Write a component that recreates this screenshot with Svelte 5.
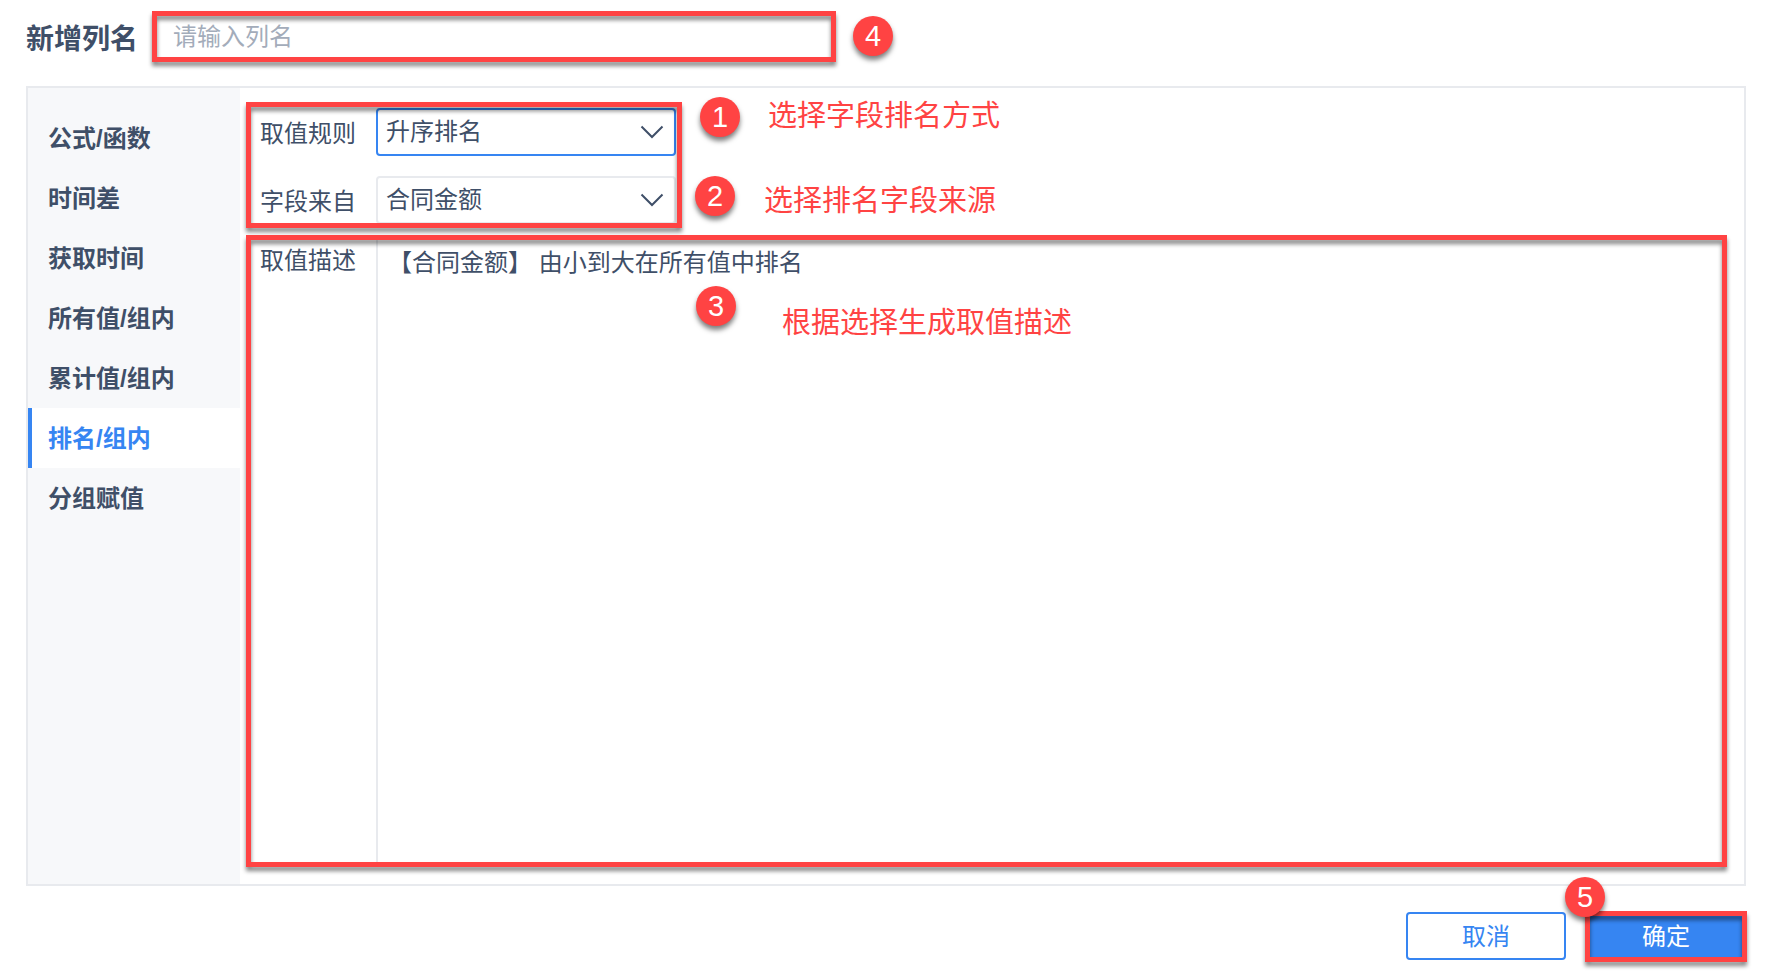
<script lang="ts">
  const tabs = ["公式/函数", "时间差", "获取时间", "所有值/组内", "累计值/组内", "排名/组内", "分组赋值"];
  const rules = ["升序排名", "降序排名"];
  const fields = ["合同金额"];

  let active = $state("排名/组内");
  let columnName = $state("");
  let rule = $state("升序排名");
  let field = $state("合同金额");

  const description = $derived(
    `【${field}】 ${rule === "升序排名" ? "由小到大" : "由大到小"}在所有值中排名`
  );
</script>

{#snippet chevron()}
  <svg class="chevron" viewBox="0 0 24 14" aria-hidden="true">
    <path d="M1.5 1.5 L12 12 L22.5 1.5" fill="none" stroke="currentColor" stroke-width="2" />
  </svg>
{/snippet}

<main class="page">
  <header class="name-row">
    <label class="title" for="column-name">新增列名</label>
    <div class="name-field framed">
      <input id="column-name" type="text" placeholder="请输入列名" bind:value={columnName} />
      <span class="badge badge-4">4</span>
    </div>
  </header>

  <section class="panel">
    <nav class="tabs">
      {#each tabs as tab}
        <button type="button" class="tab" class:active={tab === active} onclick={() => (active = tab)}>
          {tab}
        </button>
      {/each}
    </nav>

    <div class="form">
      <div class="options framed">
        <div class="row">
          <label for="rule">取值规则</label>
          <div class="select focused">
            <select id="rule" bind:value={rule}>
              {#each rules as item}
                <option>{item}</option>
              {/each}
            </select>
            {@render chevron()}
          </div>
        </div>
        <div class="row">
          <label for="field">字段来自</label>
          <div class="select">
            <select id="field" bind:value={field}>
              {#each fields as item}
                <option>{item}</option>
              {/each}
            </select>
            {@render chevron()}
          </div>
        </div>
        <span class="badge badge-1">1</span>
        <span class="note note-1">选择字段排名方式</span>
        <span class="badge badge-2">2</span>
        <span class="note note-2">选择排名字段来源</span>
      </div>

      <div class="description framed">
        <label for="description">取值描述</label>
        <textarea id="description" readonly value={description}></textarea>
        <span class="badge badge-3">3</span>
        <span class="note note-3">根据选择生成取值描述</span>
      </div>
    </div>
  </section>

  <footer class="actions">
    <button type="button" class="btn">取消</button>
    <div class="confirm framed">
      <button type="button" class="btn primary">确定</button>
      <span class="badge badge-5">5</span>
    </div>
  </footer>
</main>

<style>
  :global(body) {
    margin: 0;
    background: #fff;
  }

  .page {
    box-sizing: border-box;
    padding: 11px 22px 16px 26px;
    color: #3f4f68;
    font-family: "Liberation Sans", "Noto Sans CJK SC", sans-serif;
    font-size: 24px;
    line-height: 36px;
  }

  .page * {
    box-sizing: border-box;
  }

  button,
  input,
  select,
  textarea {
    margin: 0;
    border: 0;
    border-radius: 0;
    outline: 0;
    background: none;
    color: inherit;
    font: inherit;
  }

  button {
    cursor: pointer;
  }

  /* red highlight laid over a control or a group */
  .framed {
    position: relative;
  }

  .framed::after {
    content: "";
    position: absolute;
    inset: 0;
    border: 5px solid #ff4343;
    filter: drop-shadow(0 4px 2px rgba(0, 0, 0, 0.48));
    pointer-events: none;
  }

  .name-row {
    display: flex;
    align-items: center;
    gap: 14px;
    margin-bottom: 24px;
  }

  .title {
    flex: none;
    padding-top: 6px;
    font-size: 28px;
    font-weight: 700;
  }

  .name-field {
    flex: 0 1 684px;
  }

  .name-field input {
    display: block;
    width: 100%;
    height: 51px;
    padding: 0 21px;
  }

  .name-field input::placeholder {
    color: #a3acba;
    opacity: 1;
  }

  .panel {
    display: flex;
    border: 2px solid #e8eaee;
  }

  .tabs {
    flex: 0 0 212px;
    padding-top: 20px;
    background: #f7f8fa;
  }

  .tab {
    display: block;
    width: 100%;
    height: 60px;
    padding: 2px 16px 0;
    border-left: 4px solid transparent;
    font-weight: 700;
    text-align: left;
  }

  .tab.active {
    border-color: #3685f2;
    background: #fff;
    color: #3685f2;
  }

  .form {
    display: flex;
    flex: 1;
    flex-direction: column;
    gap: 7px;
    min-width: 0;
    padding: 14px 17px 17px 6px;
  }

  .options {
    display: grid;
    gap: 20px;
    width: 436px;
    padding: 6px 6px 4px 14px;
  }

  .row {
    display: flex;
    align-items: center;
  }

  .row label,
  .description label {
    flex: 0 0 116px;
  }

  .row label {
    padding-top: 4px;
  }

  .select {
    position: relative;
    flex: 1;
  }

  .select select {
    display: block;
    width: 100%;
    height: 48px;
    padding: 0 40px 0 8px;
    border: 2px solid #e8eaee;
    border-radius: 4px;
    appearance: none;
  }

  .select.focused select {
    border-color: #3685f2;
  }

  .chevron {
    position: absolute;
    top: 17px;
    right: 12px;
    width: 24px;
    height: 14px;
    pointer-events: none;
  }

  .description {
    display: flex;
    min-height: 632px;
    padding-left: 14px;
  }

  .description label {
    padding-top: 8px;
  }

  .description textarea {
    flex: 1;
    min-width: 0;
    padding: 10px;
    border-left: 2px solid #e8eaee;
    resize: none;
  }

  .actions {
    display: flex;
    justify-content: flex-end;
    gap: 20px;
    margin-top: 26px;
  }

  .btn {
    display: block;
    width: 160px;
    height: 48px;
    padding: 2px 0 0;
    border: 2px solid #3685f2;
    border-radius: 4px;
    color: #3685f2;
  }

  .btn.primary {
    background: #3685f2;
    color: #fff;
  }

  .confirm::after {
    inset: -1px -1px -2px;
  }

  .badge,
  .note {
    position: absolute;
    z-index: 1;
    line-height: 40px;
    pointer-events: none;
  }

  .badge {
    width: 40px;
    height: 40px;
    border-radius: 50%;
    background: #ff4343;
    box-shadow: 0 4px 5px rgba(0, 0, 0, 0.5);
    color: #fff;
    font-size: 29px;
    text-align: center;
  }

  .note {
    color: #ff4343;
    font-size: 29px;
    white-space: nowrap;
  }

  .badge-1 {
    top: -5px;
    left: 454px;
  }

  .note-1 {
    top: -6px;
    left: 522px;
  }

  .badge-2 {
    top: 74px;
    left: 449px;
  }

  .note-2 {
    top: 79px;
    left: 518px;
  }

  .badge-3 {
    top: 51px;
    left: 450px;
  }

  .note-3 {
    top: 68px;
    left: 536px;
  }

  .badge-4 {
    top: 5px;
    left: calc(100% + 17px);
  }

  .badge-5 {
    top: -35px;
    left: -21px;
  }
</style>
